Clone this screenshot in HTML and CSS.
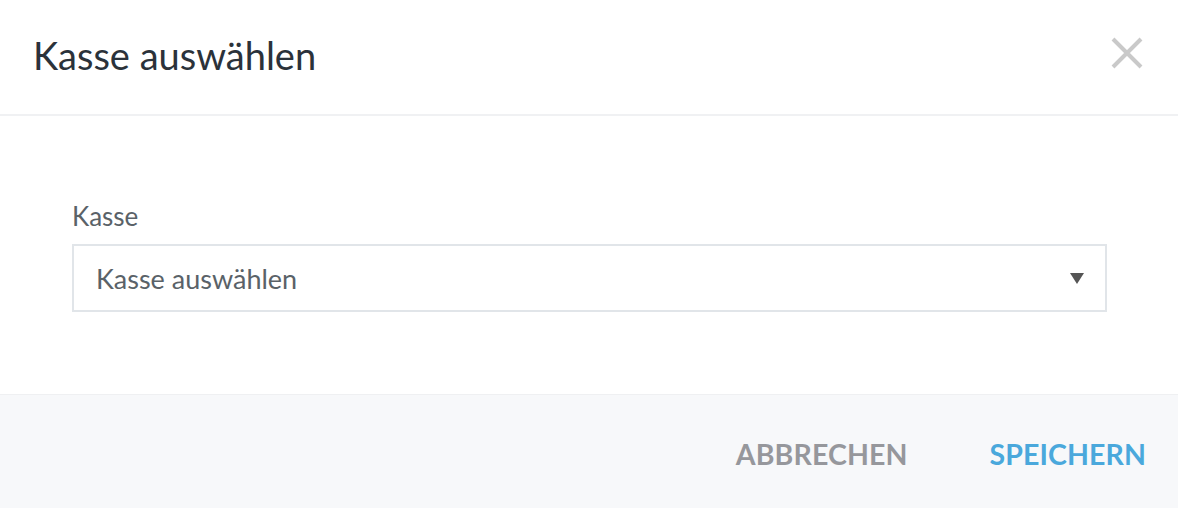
FILE: index.html
```html
<!DOCTYPE html>
<html lang="de">
<head>
  <meta charset="UTF-8">
  <title>Kasse auswählen</title>
  <link rel="stylesheet" href="styles.css">
</head>
<body>
  <div class="modal">
    <div class="modal-header">
      <h2 class="modal-title">Kasse auswählen</h2>
      <button type="button" class="close" aria-label="Schließen">
        <svg width="32" height="32" viewBox="0 0 32 32">
          <path d="M2 2 L30 30 M30 2 L2 30" stroke="#c9c9c9" stroke-width="4" fill="none"/>
        </svg>
      </button>
    </div>
    <div class="modal-body">
      <label class="field-label" for="kasse">Kasse</label>
      <div class="select" id="kasse">
        <span class="select-text">Kasse auswählen</span>
        <span class="caret"></span>
      </div>
    </div>
    <div class="modal-footer">
      <button type="button" class="btn btn-cancel">ABBRECHEN</button>
      <button type="button" class="btn btn-save">SPEICHERN</button>
    </div>
  </div>
</body>
</html>
```

FILE: styles.css
```css
body {
  margin: 0;
  font-family: Lato, "Noto Sans", sans-serif;
  background-color: #fff;
}
.modal {
  width: 1178px;
  height: 508px;
  display: flex;
  flex-direction: column;
}
.modal-header {
  height: 116px;
  box-sizing: border-box;
  border-bottom: 2px solid #f0f1f3;
  display: flex;
  align-items: center;
  justify-content: space-between;
  padding: 0 33px 5px;
}
.modal-title {
  margin: 0;
  font-size: 38px;
  font-weight: 400;
  color: #2b323a;
}
.close {
  background: none;
  border: none;
  padding: 0;
  margin: 0 2px 3px 0;
  display: flex;
}
.modal-body {
  flex: 1;
  padding: 2px 71px 0 72px;
  display: flex;
  flex-direction: column;
  justify-content: center;
}
.field-label {
  font-size: 26px;
  color: #5a6268;
  margin-bottom: 12px;
}
.select {
  height: 68px;
  box-sizing: border-box;
  border: 2px solid #e1e5e9;
  display: flex;
  align-items: center;
  justify-content: space-between;
  padding: 0 21px 0 22px;
}
.select-text {
  font-size: 27px;
  color: #5a6268;
}
.caret {
  width: 0;
  height: 0;
  border-left: 7px solid transparent;
  border-right: 7px solid transparent;
  border-top: 11px solid #555;
}
.modal-footer {
  height: 114px;
  box-sizing: border-box;
  background-color: #f7f8fa;
  border-top: 1px solid #eff0f2;
  display: flex;
  align-items: center;
  justify-content: flex-end;
  padding: 4px 32px 0 0;
}
.btn {
  background: none;
  border: none;
  padding: 0;
  font-family: Lato, "Noto Sans", sans-serif;
  font-size: 28.5px;
  font-weight: 700;
  letter-spacing: 0.1px;
}
.btn-cancel {
  color: #96979c;
  margin-right: 82px;
}
.btn-save {
  color: #4aa8dc;
}
```
